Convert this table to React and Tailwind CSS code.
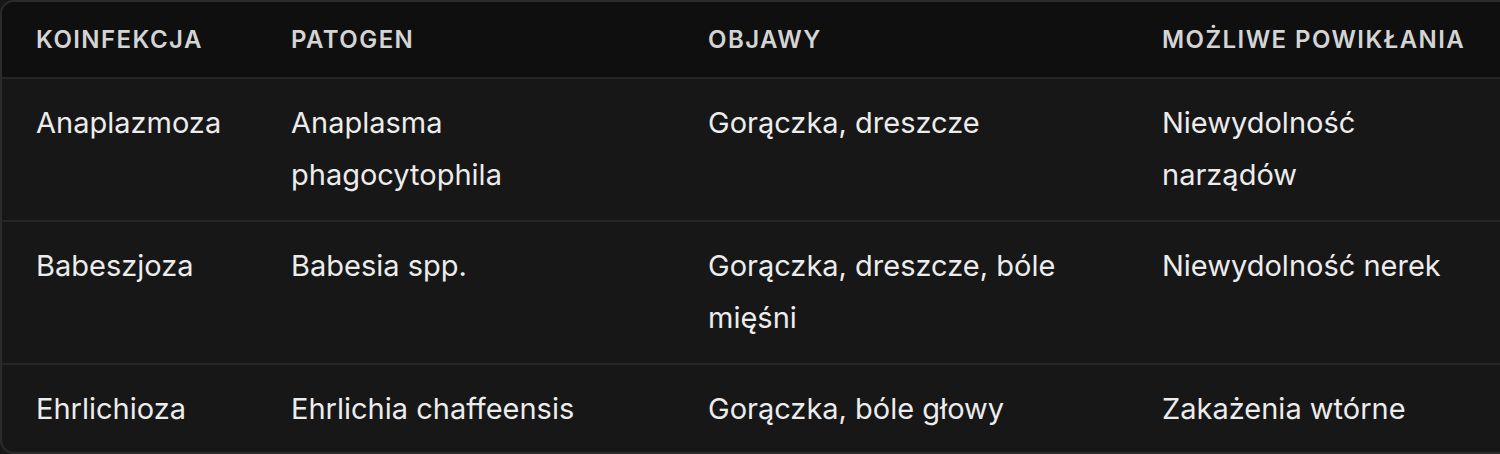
export default function App() {
  const rows = [
    ["Anaplazmoza", "Anaplasma phagocytophila", "Gorączka, dreszcze", "Niewydolność narządów"],
    ["Babeszjoza", "Babesia spp.", "Gorączka, dreszcze, bóle mięśni", "Niewydolność nerek"],
    ["Ehrlichioza", "Ehrlichia chaffeensis", "Gorączka, bóle głowy", "Zakażenia wtórne"],
  ];
  const heads = ["Koinfekcja", "Patogen", "Objawy", "Możliwe powikłania"];
  return (
    <div className="w-[1500px] h-[454px] overflow-hidden bg-[#171717]" style={{ fontFamily: "Inter, 'Noto Sans', sans-serif" }}>
      <div className="w-[1520px] h-[454px] rounded-[14px] border-2 border-[#2b2b2b] overflow-hidden bg-[#171717]">
        <div className="grid grid-cols-[255px_417px_454px_1fr] h-[77px] items-center bg-[#0f0f0f] border-b-2 border-[#262626]">
          {heads.map((h) => (
            <div key={h} className="pl-[34px] pr-[36px] text-[24px] font-semibold uppercase tracking-[0.06em] text-[#d4d4d4] whitespace-nowrap">
              {h}
            </div>
          ))}
        </div>
        {rows.map((r, i) => (
          <div key={i} className={"grid grid-cols-[255px_417px_454px_1fr] pt-[18px] pb-[19px] " + (i < rows.length - 1 ? "border-b-2 border-[#262626]" : "")}>
            {r.map((c, j) => (
              <div key={j} className="pl-[34px] pr-[36px] text-[29px] leading-[52px] text-[#ececec]">
                {c}
              </div>
            ))}
          </div>
        ))}
      </div>
    </div>
  );
}
